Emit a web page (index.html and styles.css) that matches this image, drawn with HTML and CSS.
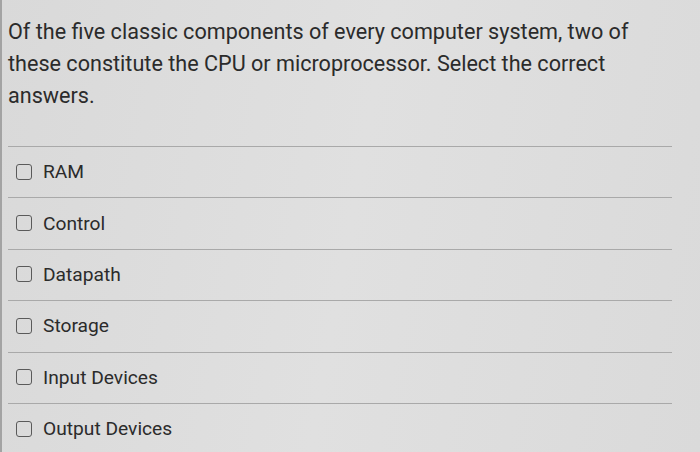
FILE: index.html
```html
<!DOCTYPE html>
<html lang="en">
<head>
<meta charset="utf-8">
<link rel="stylesheet" href="styles.css">
</head>
<body>
<div class="page">
  <p class="question">Of the five classic components of every computer system, two of these constitute the CPU or microprocessor. Select the correct answers.</p>
  <ul class="options">
    <li class="option"><span class="box"></span><span class="label">RAM</span></li>
    <li class="option"><span class="box"></span><span class="label">Control</span></li>
    <li class="option"><span class="box"></span><span class="label">Datapath</span></li>
    <li class="option"><span class="box"></span><span class="label">Storage</span></li>
    <li class="option"><span class="box"></span><span class="label">Input Devices</span></li>
    <li class="option"><span class="box"></span><span class="label">Output Devices</span></li>
  </ul>
</div>
</body>
</html>
```

FILE: styles.css
```css
html, body {
  margin: 0;
  padding: 0;
}
body {
  width: 700px;
  height: 452px;
  overflow: hidden;
  background: linear-gradient(100deg, #d9d9d9 0%, #e0e0e0 50%, #dadada 100%);
  font-family: Roboto, "Liberation Sans", sans-serif;
  color: #2b2b2b;
}
.page {
  height: 452px;
  box-sizing: border-box;
  border-left: 2px solid #a3a3a3;
  padding-left: 6px;
  width: 672px;
}
.question {
  margin: 0;
  padding-top: 16px;
  height: 130px;
  font-size: 21.6px;
  line-height: 32px;
}
.options {
  list-style: none;
  margin: 0;
  padding: 0;
}
.option {
  display: flex;
  align-items: center;
  gap: 11px;
  box-sizing: border-box;
  height: 51.4px;
  border-top: 1px solid #a9a9a9;
  padding-left: 8px;
  padding-bottom: 1px;
}
.box {
  width: 14px;
  height: 14px;
  border: 1.5px solid #5a5a5a;
  border-radius: 3px;
  flex: none;
}
.label {
  font-size: 19.2px;
  color: #2b2b2b;
}
```
